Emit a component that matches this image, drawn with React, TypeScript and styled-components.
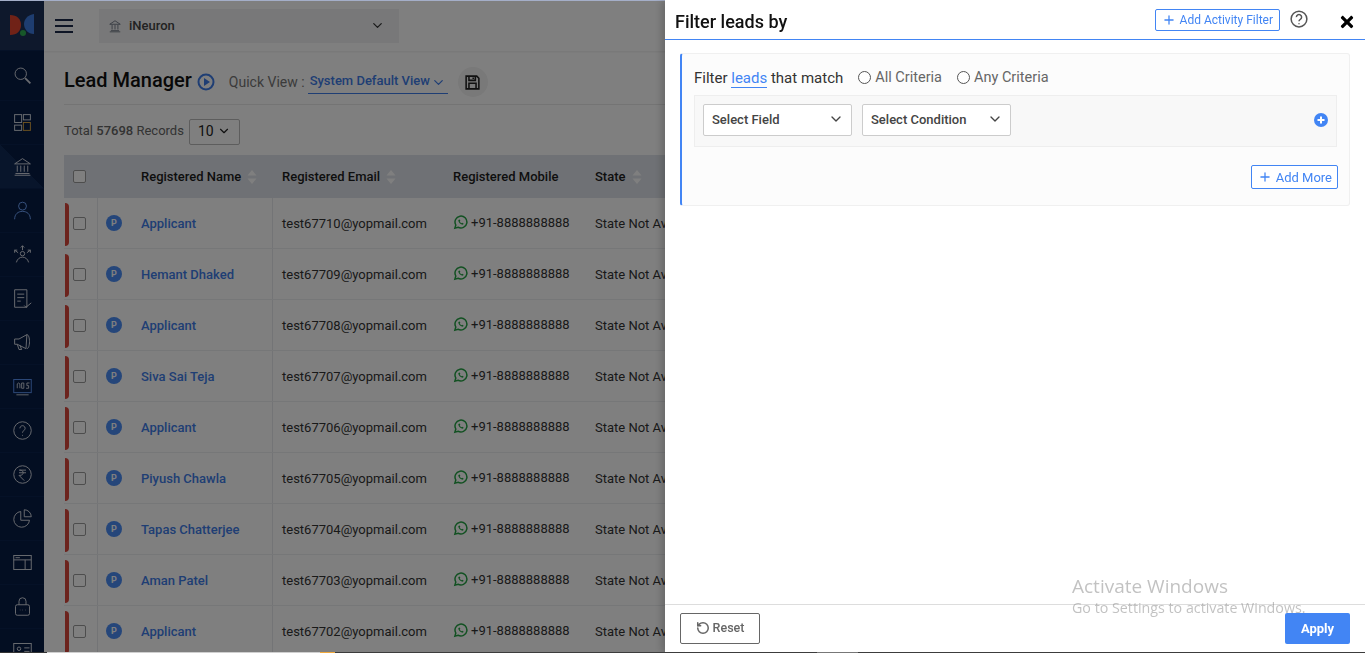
import React from 'react';
import styled, { createGlobalStyle } from 'styled-components';
import { ChevronDown, Plus, RotateCcw } from 'lucide-react';
import { FaTimes } from 'react-icons/fa';

const leads = [
  { name: 'Applicant', email: 'test67710@yopmail.com' },
  { name: 'Hemant Dhaked', email: 'test67709@yopmail.com' },
  { name: 'Applicant', email: 'test67708@yopmail.com' },
  { name: 'Siva Sai Teja', email: 'test67707@yopmail.com' },
  { name: 'Applicant', email: 'test67706@yopmail.com' },
  { name: 'Piyush Chawla', email: 'test67705@yopmail.com' },
  { name: 'Tapas Chatterjee', email: 'test67704@yopmail.com' },
  { name: 'Aman Patel', email: 'test67703@yopmail.com' },
  { name: 'Applicant', email: 'test67702@yopmail.com' },
];

const navIcons: React.ReactNode[] = [
  <><circle cx="10" cy="10" r="6.5" /><path d="M15 15l6 6" strokeWidth="2" /></>,
  <><rect x="3" y="3" width="8" height="9" /><rect x="13" y="3" width="8" height="6" /><rect x="3" y="15" width="8" height="6" /><rect x="13" y="12" width="8" height="9" stroke="#d9a441" /></>,
  <><path d="M3 9l9-6 9 6zM4 20h16M3 22h18M6 11v7M10 11v7M14 11v7M18 11v7" /></>,
  <><circle cx="12" cy="7" r="4.5" stroke="#6fa5ff" /><path d="M3 22c0-6 4-9 9-9s9 3 9 9" stroke="#6fa5ff" /></>,
  <><circle cx="12" cy="11" r="2.5" /><path d="M5 21c1-4 4-6 7-6s6 2 7 6M12 7V2M10 4l2-2 2 2M7 10L3 7M3 10V7h3M17 10l4-3M18 7h3v3" /></>,
  <><path d="M3 2h14v20H3zM6 7h8M6 11h8M6 15h4M14 20l2 2 6-5" /></>,
  <><path d="M17 3L8 8H3v6h3l10 5zM17 3c2 0 3 4 3 8s-1 8-3 8M6 14l2 6h3l-2-5" /></>,
  <><rect x="2" y="4" width="20" height="15" stroke="#5a93f5" /><path d="M5 21.500h14M6 14v-5l1.500-1 1.500 1v5M11 8h2.500v6H11zM20 8h-3v3h2v3h-3" strokeWidth="1" /></>,
  <><circle cx="12" cy="12" r="10" /><path d="M9 9.500a3 3 0 1 1 4.500 2.600c-1 .6-1.500 1.200-1.500 2.400M12 17v1" /></>,
  <><circle cx="12" cy="12" r="10" /><path d="M8 7h8M8 10h8M9 7c5 0 5 6 0 6h-1l6 6" /></>,
  <><path d="M10 4a9 9 0 1 0 10 10H10zM14 2a8 8 0 0 1 8 8h-8z" /></>,
  <><rect x="2" y="4" width="20" height="16" /><path d="M2 9h20M15 9v11M4 6.500h5" /></>,
  <><rect x="4" y="10" width="16" height="12" rx="2" /><path d="M8 10V6a4 4 0 0 1 8 0v4M9 16h.500M12 16h.500M15 16h.500" /></>,
  <><rect x="2" y="4" width="20" height="16" /><circle cx="8" cy="10" r="2" /><path d="M4 17c0-3 8-3 8 0M14 9h6M14 13h6" /></>,
];

function Sort() {
  return (
    <SortMark viewBox="0 0 10 16">
      <path d="M5 1l4.500 5.500h-9zM5 15L.5 9.500h9z" />
    </SortMark>
  );
}

function WhatsApp() {
  return (
    <svg width="15" height="15" viewBox="0 0 24 24" fill="none" stroke="#25a244" strokeWidth="2.400">
      <path d="M3 21l1.500-5A9.500 9.500 0 1 1 8 19.500z" />
      <path d="M8.500 8c0 4 3.500 7.500 7.500 7.500l1-2-2.500-1.200-1 1c-1.200-.5-2.300-1.700-2.800-2.800l1-1L11 7z" fill="#25a244" stroke="none" />
    </svg>
  );
}

function App() {
  return (
    <>
      <GlobalStyle />
      <Page>
        <SideNav>
          <LogoCell>
            <svg width="26" height="24" viewBox="0 0 26 24">
              <path d="M1 2c7 0 11 4 11 10S8 22 1 22z" fill="#e0452f" />
              <path d="M25 1c-6 1-10 5-10 10s4 10 10 10z" fill="#3d7be0" />
              <circle cx="14" cy="20" r="3" fill="#2fae52" />
            </svg>
          </LogoCell>
          {navIcons.map((icon, i) => (
            <NavCell key={i} $active={i === 2} $first={i === 0}>
              <NavIcon viewBox="0 0 24 24">{icon}</NavIcon>
            </NavCell>
          ))}
        </SideNav>

        <MainArea>
          <TopBar>
            <Burger>
              <span />
              <span />
              <span />
            </Burger>
            <OrgSelect>
              <OrgName>
                <svg width="14" height="14" viewBox="0 0 24 24" fill="none" stroke="#6b7280" strokeWidth="1.500">
                  <path d="M3 9l9-6 9 6zM5 20h14M3 22h18M7 10v8M12 10v8M17 10v8" />
                </svg>
                iNeuron
              </OrgName>
              <ChevronDown size={15} color="#333" />
            </OrgSelect>
          </TopBar>

          <Content>
            <TitleRow>
              <PageTitle>Lead Manager</PageTitle>
              <PlayMark width="18" height="18" viewBox="0 0 18 18">
                <circle cx="9" cy="9" r="7.500" fill="none" stroke="#3f7de8" strokeWidth="2" />
                <path d="M7 5l6 4-6 4z" fill="#3f7de8" />
              </PlayMark>
              <QuickLabel>Quick View :</QuickLabel>
              <ViewSelect>
                System Default View
                <ChevronDown size={15} />
              </ViewSelect>
              <SaveButton>
                <svg width="17" height="17" viewBox="0 0 24 24" fill="none" stroke="#222" strokeWidth="2.200">
                  <path d="M3 3h15l3 3v15H3zM7 3v6h9V3M13 5v2M7 21v-8h10v8" />
                </svg>
              </SaveButton>
            </TitleRow>

            <RecordsRow>
              <span>
                Total <b>57698</b> Records
              </span>
              <PageSize>
                10
                <ChevronDown size={14} />
              </PageSize>
            </RecordsRow>

            <LeadTable>
              <HeadRow>
                <CheckCell>
                  <CheckBox />
                </CheckCell>
                <BadgeCell />
                <HeadCell $flush>
                  Registered Name <Sort />
                </HeadCell>
                <HeadCell>
                  Registered Email <Sort />
                </HeadCell>
                <HeadCell>Registered Mobile</HeadCell>
                <HeadCell>
                  State <Sort />
                </HeadCell>
              </HeadRow>
              {leads.map((lead) => (
                <LeadRow key={lead.email}>
                  <CheckCell>
                    <RedFlag />
                    <CheckBox />
                  </CheckCell>
                  <BadgeCell $divided>
                    <Badge>P</Badge>
                  </BadgeCell>
                  <NameCell>{lead.name}</NameCell>
                  <BodyCell>{lead.email}</BodyCell>
                  <BodyCell>
                    <MobileText>
                      <WhatsApp />
                      +91-8888888888
                    </MobileText>
                  </BodyCell>
                  <BodyCell>State Not Available</BodyCell>
                </LeadRow>
              ))}
            </LeadTable>
          </Content>
        </MainArea>
      </Page>

      <Backdrop />
      <TopEdge />

      <FilterPanel>
        <PanelHead>
          <PanelTitle>Filter leads by</PanelTitle>
          <HeadActions>
            <OutlineButton>
              <Plus size={14} strokeWidth={2.2} />
              Add Activity Filter
            </OutlineButton>
            <HelpMark width="18" height="18" viewBox="0 0 24 24" fill="none" stroke="#555" strokeWidth="2">
              <circle cx="12" cy="12" r="10.500" />
              <path d="M8.500 9.500a3.500 3.500 0 1 1 5.300 3c-1.200.7-1.800 1.300-1.800 2.500M12 17.500v1.500" />
            </HelpMark>
            <CloseMark>
              <FaTimes size={18} />
            </CloseMark>
          </HeadActions>
        </PanelHead>

        <PanelBody>
          <CriteriaCard>
            <MatchRow>
              <MatchText>
                Filter <LeadsWord>leads</LeadsWord> that match
              </MatchText>
              <RadioLabel>
                <RadioDot />
                All Criteria
              </RadioLabel>
              <RadioLabel>
                <RadioDot />
                Any Criteria
              </RadioLabel>
            </MatchRow>
            <ConditionRow>
              <FieldSelect>
                Select Field
                <ChevronDown size={16} />
              </FieldSelect>
              <FieldSelect>
                Select Condition
                <ChevronDown size={16} />
              </FieldSelect>
              <AddCondition>
                <svg width="14" height="14" viewBox="0 0 14 14">
                  <circle cx="7" cy="7" r="7" fill="#4285f4" />
                  <path d="M7 3.500v7M3.500 7h7" stroke="#fff" strokeWidth="2" />
                </svg>
              </AddCondition>
            </ConditionRow>
            <MoreRow>
              <MoreButton>
                <Plus size={14} strokeWidth={2.2} />
                Add More
              </MoreButton>
            </MoreRow>
          </CriteriaCard>
        </PanelBody>

        <PanelFoot>
          <ResetButton>
            <RotateCcw size={14} strokeWidth={2.6} />
            Reset
          </ResetButton>
          <ApplyButton>Apply</ApplyButton>
        </PanelFoot>
      </FilterPanel>

      <Watermark>
        <strong>Activate Windows</strong>
        <span>Go to Settings to activate Windows.</span>
      </Watermark>
      <BottomEdge />
    </>
  );
}

export default App;

const GlobalStyle = createGlobalStyle`
  html, body {
    margin: 0;
    height: 100%;
    overflow: hidden;
  }
  body {
    font-family: Roboto, "Liberation Sans", sans-serif;
    font-size: 13px;
    color: #222;
    background: #fff;
  }
  * {
    box-sizing: border-box;
  }
`;

const Page = styled.div`
  display: flex;
  height: 653px;
  overflow: hidden;
`;

const SideNav = styled.nav`
  flex: 0 0 44px;
  background: #071c44;
  overflow: hidden;
`;

const LogoCell = styled.div`
  height: 50px;
  display: flex;
  align-items: center;
  justify-content: center;
  background: #1c3158;
`;

const NavCell = styled.div<{ $active?: boolean; $first?: boolean }>`
  height: ${(p) => (p.$first ? '50px' : '44px')};
  flex-shrink: 0;
  display: flex;
  align-items: center;
  justify-content: center;
  border-top: 1px solid #0b234e;
  background: ${(p) => (p.$active ? 'linear-gradient(45deg, #102a56 50%, #071c44 50%)' : 'transparent')};
`;

const NavIcon = styled.svg`
  width: 21px;
  height: 21px;
  fill: none;
  stroke: #d4d9e2;
  stroke-width: 1.100;
`;

const MainArea = styled.div`
  flex: 1;
  min-width: 0;
`;

const TopBar = styled.header`
  height: 51px;
  display: flex;
  align-items: center;
  gap: 26px;
  padding: 0 0 0 11px;
  background: #fff;
  box-shadow: 0 1px 2px rgba(0, 0, 0, 0.08);
`;

const Burger = styled.div`
  width: 18px;
  display: flex;
  flex-direction: column;
  gap: 4px;
  span {
    height: 2px;
    background: #1c2b4a;
  }
`;

const OrgSelect = styled.div`
  width: 300px;
  height: 34px;
  display: flex;
  align-items: center;
  justify-content: space-between;
  padding: 0 14px 0 9px;
  background: #f0f1f3;
  color: #444;
`;

const OrgName = styled.span`
  display: flex;
  align-items: center;
  gap: 7px;
  font-size: 13px;
  font-weight: 500;
`;

const Content = styled.main`
  padding: 0 20px;
`;

const TitleRow = styled.div`
  height: 54px;
  display: flex;
  align-items: center;
  padding-top: 4px;
  border-bottom: 1px solid #e8e8e8;
`;

const PageTitle = styled.h1`
  margin: 0 5px 0 0;
  font-size: 20px;
  font-weight: 500;
  color: #111;
`;

const PlayMark = styled.svg`
  margin-top: 4px;
`;

const QuickLabel = styled.span`
  margin: 4px 3px 0 14px;
  font-size: 14px;
  color: #777;
`;

const ViewSelect = styled.div`
  width: 140px;
  height: 26px;
  margin-top: 3px;
  display: flex;
  align-items: center;
  justify-content: space-between;
  padding: 0 2px;
  border-bottom: 1px solid #3f7de8;
  color: #3f7de8;
  font-size: 13px;
  font-weight: 500;
  svg {
    margin-top: 4px;
  }
`;

const SaveButton = styled.div`
  width: 30px;
  height: 30px;
  margin: 5px 0 0 10px;
  display: flex;
  align-items: center;
  justify-content: center;
  border-radius: 50%;
  background: #f2f2f2;
`;

const RecordsRow = styled.div`
  height: 50px;
  display: flex;
  align-items: center;
  gap: 5px;
  font-size: 13px;
  color: #666;
  b {
    font-weight: 500;
  }
`;

const PageSize = styled.div`
  width: 51px;
  height: 26px;
  margin-top: 4px;
  display: flex;
  align-items: center;
  justify-content: space-between;
  padding: 0 8px 2px;
  border: 1px solid #bbb;
  border-radius: 2px;
  font-size: 14px;
  color: #222;
`;

const LeadTable = styled.div`
  width: 700px;
`;

const tableColumns = `
  display: grid;
  grid-template-columns: 33px 44px 132px 171px 142px 178px;
`;

const HeadRow = styled.div`
  ${tableColumns}
  height: 43px;
  align-items: center;
  background: #dfe3ea;
`;

const LeadRow = styled.div`
  ${tableColumns}
  height: 51px;
  align-items: center;
  border-bottom: 1px solid #eceef1;
`;

const HeadCell = styled.div<{ $flush?: boolean }>`
  display: flex;
  align-items: center;
  gap: 6px;
  padding-left: ${(p) => (p.$flush ? '0' : '9px')};
  font-size: 13px;
  font-weight: 500;
  color: #1c1c1c;
  white-space: nowrap;
`;

const SortMark = styled.svg`
  width: 10px;
  height: 16px;
  fill: #fff;
`;

const CheckCell = styled.div`
  position: relative;
  height: 100%;
  display: flex;
  align-items: center;
  padding-left: 9px;
`;

const CheckBox = styled.span`
  width: 13px;
  height: 13px;
  border: 1px solid #9a9a9a;
  border-radius: 2px;
  background: #fff;
`;

const RedFlag = styled.span`
  position: absolute;
  left: 1px;
  top: 5px;
  bottom: 2px;
  width: 4px;
  border-radius: 0 4px 4px 0;
  background: #d9463a;
`;

const BadgeCell = styled.div<{ $divided?: boolean }>`
  height: 100%;
  display: flex;
  align-items: center;
  padding-left: 8px;
  border-left: ${(p) => (p.$divided ? '1px solid #e6e8ec' : '0')};
`;

const Badge = styled.span`
  width: 16px;
  height: 16px;
  display: flex;
  align-items: center;
  justify-content: center;
  border-radius: 50%;
  background: #4a8cf5;
  color: #fff;
  font-size: 9px;
  font-weight: 700;
`;

const BodyCell = styled.div`
  height: 100%;
  display: flex;
  align-items: center;
  padding-left: 9px;
  font-size: 13px;
  color: #333;
  white-space: nowrap;
  overflow: hidden;
`;

const NameCell = styled(BodyCell)`
  padding-left: 0;
  border-right: 1px solid #e6e8ec;
  color: #3f7de8;
  font-weight: 500;
`;

const MobileText = styled.span`
  display: flex;
  align-items: center;
  gap: 3px;
  margin-top: -2px;
`;

const Backdrop = styled.div`
  position: fixed;
  inset: 0;
  background: rgba(0, 0, 0, 0.5);
`;

const TopEdge = styled.div`
  position: fixed;
  top: 0;
  left: 0;
  right: 0;
  height: 1px;
  background: #a4aec8;
`;

const BottomEdge = styled.div`
  position: fixed;
  left: 0;
  right: 0;
  bottom: 0;
  height: 1px;
  background: linear-gradient(
    to right,
    #333 47px,
    #cfcfcf 47px 320px,
    #f0a83c 320px 335px,
    #3c3c3c 335px 817px,
    #777 817px 858px,
    #3c3c3c 858px
  );
`;

const FilterPanel = styled.aside`
  position: fixed;
  top: 0;
  right: 0;
  bottom: 0;
  width: 700px;
  display: flex;
  flex-direction: column;
  background: #fff;
  box-shadow: -3px 0 8px rgba(0, 0, 0, 0.2);
`;

const PanelHead = styled.div`
  height: 40px;
  display: flex;
  align-items: center;
  justify-content: space-between;
  padding: 4px 11px 0 10px;
  border-bottom: 1px solid #4285f4;
`;

const PanelTitle = styled.h2`
  margin: 0;
  font-size: 18px;
  font-weight: 500;
  color: #111;
`;

const HeadActions = styled.div`
  display: flex;
  align-items: center;
  margin-top: -4px;
`;

const OutlineButton = styled.button`
  height: 22px;
  display: flex;
  align-items: center;
  gap: 4px;
  padding: 0 6px;
  border: 1px solid #4285f4;
  border-radius: 2px;
  background: #fff;
  color: #4285f4;
  font: 400 12px Roboto, sans-serif;
`;

const HelpMark = styled.svg`
  margin: -1px 0 0 10px;
`;

const CloseMark = styled.span`
  display: flex;
  margin: 4px -2px 0 30px;
  color: #000;
`;

const PanelBody = styled.div`
  flex: 1;
  padding: 13px 15px 0;
`;

const CriteriaCard = styled.section`
  height: 153px;
  padding: 13px 12px 0 12px;
  border: 1px solid #f0f0f0;
  border-left: 2px solid #4285f4;
  border-radius: 3px;
  background: #fcfcfc;
`;

const MatchRow = styled.div`
  display: flex;
  align-items: center;
  height: 21px;
  font-size: 14.500px;
  color: #333;
`;

const MatchText = styled.span`
  font-size: 15px;
`;

const LeadsWord = styled.span`
  color: #4285f4;
  border-bottom: 1px solid #4285f4;
`;

const RadioLabel = styled.label`
  display: flex;
  align-items: center;
  gap: 4px;
  margin-left: 15px;
  color: #666;
`;

const RadioDot = styled.span`
  width: 13px;
  height: 13px;
  border: 1px solid #555;
  border-radius: 50%;
  background: #fff;
`;

const ConditionRow = styled.div`
  height: 52px;
  margin-top: 7px;
  display: flex;
  align-items: center;
  gap: 10px;
  padding: 0 8px 2px;
  border: 1px solid #eeeeee;
  background: #f8f8f8;
`;

const FieldSelect = styled.div`
  width: 149px;
  height: 32px;
  display: flex;
  align-items: center;
  justify-content: space-between;
  padding: 0 7px 2px 8px;
  border: 1px solid #ccc;
  border-radius: 2px;
  background: #fff;
  font-size: 13px;
  font-weight: 500;
  color: #444;
`;

const AddCondition = styled.span`
  display: flex;
  margin-left: auto;
`;

const MoreRow = styled.div`
  display: flex;
  justify-content: flex-end;
  margin: 18px -1px 0 0;
`;

const MoreButton = styled(OutlineButton)`
  height: 24px;
  padding: 0 5px 0 6px;
  font-size: 13px;
`;

const PanelFoot = styled.footer`
  height: 49px;
  display: flex;
  align-items: flex-start;
  justify-content: space-between;
  padding: 8px 15px 0;
  border-top: 1px solid #ddd;
`;

const ResetButton = styled.button`
  width: 80px;
  height: 31px;
  display: flex;
  align-items: center;
  justify-content: center;
  gap: 3px;
  padding-bottom: 3px;
  border: 1px solid #666;
  border-radius: 2px;
  background: #fff;
  color: #666;
  font: 500 12.500px Roboto, sans-serif;
`;

const ApplyButton = styled.button`
  width: 65px;
  height: 31px;
  border: 0;
  border-radius: 2px;
  background: #4285f4;
  color: #fff;
  font: 700 13px Roboto, sans-serif;
`;

const Watermark = styled.div`
  position: fixed;
  left: 1072px;
  top: 574px;
  display: flex;
  flex-direction: column;
  gap: 1px;
  font-family: "Open Sans", sans-serif;
  color: rgba(120, 120, 120, 0.45);
  pointer-events: none;
  strong {
    font-size: 19px;
    font-weight: 400;
    line-height: 24px;
  }
  span {
    font-size: 14.250px;
    line-height: 18px;
    white-space: nowrap;
  }
`;
